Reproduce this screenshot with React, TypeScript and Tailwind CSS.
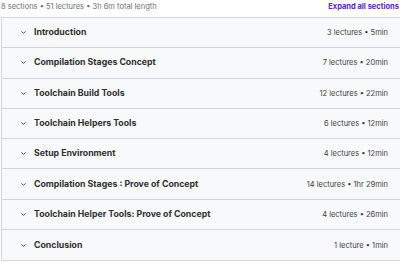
import React from "react";
import { ChevronDown } from "lucide-react";

const sections = [
  { title: "Introduction", meta: "3 lectures • 5min" },
  { title: "Compilation Stages Concept", meta: "7 lectures • 20min" },
  { title: "Toolchain Build Tools", meta: "12 lectures • 22min" },
  { title: "Toolchain Helpers Tools", meta: "6 lectures • 12min" },
  { title: "Setup Environment", meta: "4 lectures • 12min" },
  { title: "Compilation Stages : Prove of Concept", meta: "14 lectures • 1hr 29min" },
  { title: "Toolchain Helper Tools: Prove of Concept", meta: "4 lectures • 26min" },
  { title: "Conclusion", meta: "1 lecture • 1min" },
];

const App = () => {
  return (
    <div className="w-[400px] h-[262px] overflow-hidden bg-white font-['Inter',sans-serif]">
      {/* Summary line */}
      <div className="flex items-center justify-between h-[13px] px-[1px]">
        <span className="text-[7.5px] text-[#6a6f73]">
          8 sections • 51 lectures • 3h 6m total length
        </span>
        <span className="text-[7.5px] font-bold text-[#5624d0]">
          Expand all sections
        </span>
      </div>

      {/* Sections */}
      <div className="mt-[4px] ml-[1px] mr-[-2px] border border-[#d1d7dc] bg-[#f7f9fa]">
        {sections.map((s, i) => (
          <div
            key={s.title}
            className={`flex items-center justify-between h-[30.3px] pl-[18px] pr-[13px] ${
              i < sections.length - 1 ? "border-b border-[#d1d7dc]" : ""
            }`}
          >
            <div className="flex items-center gap-[7px]">
              <ChevronDown className="w-[7px] h-[7px] text-[#2d2f31]" strokeWidth={3} />
              <span className="text-[8.75px] font-bold text-[#2d2f31]">{s.title}</span>
            </div>
            <span className="text-[7.5px] text-[#3e4143]">{s.meta}</span>
          </div>
        ))}
      </div>
    </div>
  );
};

export default App;
